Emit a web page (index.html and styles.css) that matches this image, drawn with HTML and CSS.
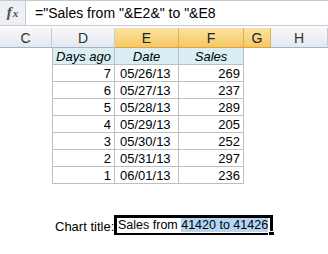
FILE: index.html
```html
<!DOCTYPE html>
<html lang="en">
<head>
    <meta charset="UTF-8">
    <title>Chart title</title>
    <link rel="stylesheet" href="styles.css">
</head>
<body>
    <div class="fbar">
        <div class="fx">f<span>x</span></div>
        <div class="formula">="Sales from "&amp;E2&amp;" to "&amp;E8</div>
    </div>
    <div class="sheet">
        <div class="colhead">C</div>
        <div class="colhead">D</div>
        <div class="colhead sel">E</div>
        <div class="colhead sel">F</div>
        <div class="colhead sel">G</div>
        <div class="colhead">H</div>

        <div class="cell"></div>
        <div class="cell hd">Days ago</div>
        <div class="cell hd">Date</div>
        <div class="cell hd">Sales</div>
        <div class="cell"></div>
        <div class="cell"></div>

        <div class="cell"></div><div class="cell td num">7</div><div class="cell td">05/26/13</div><div class="cell td num">269</div><div class="cell"></div><div class="cell"></div>
        <div class="cell"></div><div class="cell td num">6</div><div class="cell td">05/27/13</div><div class="cell td num">237</div><div class="cell"></div><div class="cell"></div>
        <div class="cell"></div><div class="cell td num">5</div><div class="cell td">05/28/13</div><div class="cell td num">289</div><div class="cell"></div><div class="cell"></div>
        <div class="cell"></div><div class="cell td num">4</div><div class="cell td">05/29/13</div><div class="cell td num">205</div><div class="cell"></div><div class="cell"></div>
        <div class="cell"></div><div class="cell td num">3</div><div class="cell td">05/30/13</div><div class="cell td num">252</div><div class="cell"></div><div class="cell"></div>
        <div class="cell"></div><div class="cell td num">2</div><div class="cell td">05/31/13</div><div class="cell td num">297</div><div class="cell"></div><div class="cell"></div>
        <div class="cell"></div><div class="cell td num">1</div><div class="cell td">06/01/13</div><div class="cell td num">236</div><div class="cell"></div><div class="cell"></div>

        <div class="cell span"></div>
        <div class="cell span"></div>

        <div class="cell"></div>
        <div class="cell num label">Chart title:</div>
        <div class="cell edit-wrap">
            <div class="edit">Sales from <span class="hl">41420 to 41426</span><b class="handle"></b></div>
        </div>
        <div class="cell"></div>
    </div>
</body>
</html>
```
FILE: styles.css
```css
body {
    margin: 0;
    background: #fff;
    font-family: "Liberation Sans", Arial, sans-serif;
    font-size: 13px;
    color: #000;
    overflow: hidden;
}
.fbar {
    display: flex;
    height: 24px;
    border-top: 1px solid #c3c9d2;
    border-bottom: 1px solid #c3c9d2;
    background: #dde3ec;
    margin-bottom: 2px;
}
.fx {
    width: 26px;
    background: #eef0f3;
    border-right: 1px solid #c3c9d2;
    display: flex;
    align-items: baseline;
    justify-content: center;
    padding-top: 3px;
    box-sizing: border-box;
    font-family: "Liberation Serif", serif;
    font-style: italic;
    font-weight: bold;
    font-size: 15px;
    color: #4a4f57;
}
.fx span {
    font-size: 11px;
    margin-left: 1px;
}
.formula {
    flex: 1;
    background: #fff;
    padding-left: 9px;
    font-size: 14px;
    line-height: 24px;
}
.sheet {
    display: grid;
    grid-template-columns: 52px 63px 64px 65px 27px 1fr;
    grid-template-rows: 20px repeat(8, 17px) 34px 17px;
}
.colhead {
    background: linear-gradient(#f7f8fa, #e4e8ee);
    border-right: 1px solid #c5ccd6;
    border-bottom: 1px solid #9eb6ce;
    text-align: center;
    line-height: 20px;
    font-size: 14px;
    color: #333;
}
.colhead.sel {
    background: linear-gradient(#fbe3a0, #f5c865);
    border-right-color: #e0b050;
    border-bottom-color: #e2a33b;
    color: #222;
}
.cell {
    line-height: 17px;
    padding: 0 3px;
    white-space: nowrap;
}
.cell.span {
    grid-column: span 3;
}
.hd {
    background: #daeef3;
    font-style: italic;
    text-align: center;
    border-right: 1px solid #bfbfbf;
    border-bottom: 1px solid #bfbfbf;
}
.hd:nth-child(8) {
    border-left: 1px solid #bfbfbf;
}
.td {
    border-right: 1px solid #bfbfbf;
    border-bottom: 1px solid #bfbfbf;
    padding-left: 5px;
}
.num {
    text-align: right;
}
.cell.td.num:nth-child(6n+2) {
    border-left: 1px solid #bfbfbf;
}
.label {
    padding-right: 5px;
}
.edit-wrap {
    grid-column: span 3;
    padding: 0;
    position: relative;
}
.edit {
    position: absolute;
    left: -1px;
    top: -3px;
    border: 3px solid #000;
    padding: 0 2px 0 1px;
    line-height: 15px;
    font-size: 12.5px;
    background: #fff;
}
.hl {
    background: #b5d5f1;
}
.handle {
    position: absolute;
    right: -5px;
    bottom: -5px;
    width: 5px;
    height: 5px;
    background: #000;
    border: 1px solid #fff;
}
```
